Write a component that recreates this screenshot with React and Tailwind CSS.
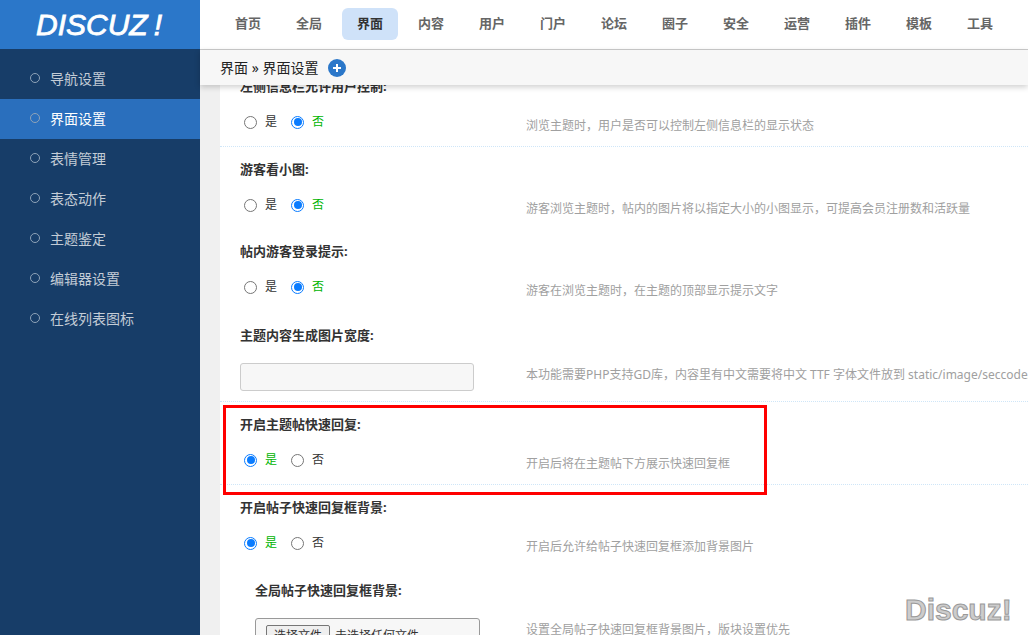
import React from 'react';

const NAV_ITEMS = ['首页', '全局', '界面', '内容', '用户', '门户', '论坛', '圈子', '安全', '运营', '插件', '模板', '工具'];
const SIDE_ITEMS = ['导航设置', '界面设置', '表情管理', '表态动作', '主题鉴定', '编辑器设置', '在线列表图标'];

const Radio = ({ checked, label }) => (
  <label className="flex items-center">
    <span className={`flex h-[13px] w-[13px] items-center justify-center rounded-full border bg-white ${checked ? 'border-[#0a7cff]' : 'border-[#767676]'}`}>
      {checked && <span className="h-[8px] w-[8px] rounded-full bg-[#0a7cff]" />}
    </span>
    <span className={`ml-[8px] text-[12px] leading-[16px] ${checked ? 'text-[#00b400]' : 'text-[#333]'}`}>{label}</span>
  </label>
);

const YesNo = ({ value }) => (
  <div className="flex gap-[14px] pl-[4px]">
    <Radio checked={value === 'yes'} label="是" />
    <Radio checked={value === 'no'} label="否" />
  </div>
);

const Row = ({ title, hint, height, divider, indent, children }) => (
  <div className={`${height} ${divider ? 'border-b border-dotted border-[#cfe6f8]' : ''} ${indent ? 'pl-[35px]' : 'pl-[20px]'}`}>
    <p className="pt-[14px] text-[13px] leading-[16px] font-bold text-[#333]">{title}</p>
    <div className="mt-[20px] flex">
      <div className={`${indent ? 'w-[271px]' : 'w-[286px]'} shrink-0`}>{children}</div>
      <p className="mt-[4px] text-[12px] leading-[16px] whitespace-nowrap text-[#a0a0a0]">{hint}</p>
    </div>
  </div>
);

export default function App() {
  return (
    <div className='relative flex h-[635px] w-[1028px] overflow-hidden bg-[#f0f0f0] font-["Noto_Sans","Noto_Sans_CJK_SC",sans-serif]'>
      {/* Sidebar */}
      <aside className="flex w-[200px] shrink-0 flex-col bg-[#173d68]">
        <div className="flex h-[49px] items-center bg-[#2b77c9] pl-[36px]">
          <span className='flex items-baseline font-["Liberation_Sans",sans-serif] text-[30px] leading-none text-white italic [-webkit-text-stroke:0.8px_#fff]'>
            DISCUZ<span className="ml-[6px]">!</span>
          </span>
        </div>
        <ul className="pt-[10px]">
          {SIDE_ITEMS.map((item, i) => (
            <li key={item} className={`flex h-[40px] items-center pb-[2px] pl-[30px] text-[14px] ${i === 1 ? 'bg-[#2a6fbd] text-white' : 'text-[#c3ccd6]'}`}>
              <span className="mr-[10px] h-[10px] w-[10px] rounded-full border border-[#8fa3b8]" />
              {item}
            </li>
          ))}
        </ul>
      </aside>

      {/* Main */}
      <div className="flex min-w-0 flex-1 flex-col">
        <nav className="flex h-[50px] shrink-0 items-center gap-[5px] border-b border-[#ccc] bg-white pb-[1px] pl-[20px]">
          {NAV_ITEMS.map((item, i) => (
            <span key={item} className={`flex h-[32px] w-[56px] items-center justify-center rounded-[6px] text-[13px] font-bold ${i === 2 ? 'bg-[#cfe2f9] text-[#333]' : 'text-[#666]'}`}>
              {item}
            </span>
          ))}
        </nav>
        <div className="relative z-10 flex h-[35px] shrink-0 items-center bg-[#f7f7f7] pl-[20px] text-[14px] text-[#222] shadow-[0_2px_6px_rgba(0,0,0,0.2)]">
          <span>界面 » 界面设置</span>
          <span className="ml-[10px] flex h-[18px] w-[18px] items-center justify-center rounded-full bg-[#2b77c9]">
            <svg width="10" height="10" viewBox="0 0 10 10"><path d="M5 1v8M1 5h8" stroke="#fff" strokeWidth="2" /></svg>
          </span>
        </div>
        <div className="min-h-0 flex-1 overflow-hidden pl-[20px]">
          <div className="-mt-[21px] bg-white">
            <Row title="左侧信息栏允许用户控制:" hint="浏览主题时，用户是否可以控制左侧信息栏的显示状态" height="h-[83px]" divider>
              <YesNo value="no" />
            </Row>
            <Row title="游客看小图:" hint="游客浏览主题时，帖内的图片将以指定大小的小图显示，可提高会员注册数和活跃量" height="h-[82px]">
              <YesNo value="no" />
            </Row>
            <Row title="帖内游客登录提示:" hint="游客在浏览主题时，在主题的顶部显示提示文字" height="h-[84px]">
              <YesNo value="no" />
            </Row>
            <Row title="主题内容生成图片宽度:" hint="本功能需要PHP支持GD库，内容里有中文需要将中文 TTF 字体文件放到 static/image/seccode/font/ch/ 目录下" height="h-[89px]" divider>
              <div className="h-[28px] w-[234px] rounded-[3px] border border-[#ccc] bg-[#f7f7f7]" />
            </Row>
            <Row title="开启主题帖快速回复:" hint="开启后将在主题帖下方展示快速回复框" height="h-[83px]" divider>
              <YesNo value="yes" />
            </Row>
            <Row title="开启帖子快速回复框背景:" hint="开启后允许给帖子快速回复框添加背景图片" height="h-[83px]">
              <YesNo value="yes" />
            </Row>
            <Row title="全局帖子快速回复框背景:" hint="设置全局帖子快速回复框背景图片，版块设置优先" height="h-[80px]" indent>
              <div className="flex h-[40px] w-[225px] items-start rounded-[3px] border border-[#999] bg-[#f7f7f7] pt-[6px] pl-[10px] text-[12px] text-[#333]">
                <span className="mr-[5px] rounded-[2px] border border-[#767676] bg-[#efefef] px-[7px] leading-[20px]">选择文件</span>
                <span className="leading-[22px]">未选择任何文件</span>
              </div>
            </Row>
          </div>
        </div>
      </div>

      {/* Annotation and watermark lying over the page */}
      <div className="absolute top-[405px] left-[223px] h-[90px] w-[544px] border-[3px] border-[#f00]" />
      <span className='absolute top-[592px] left-[905px] font-["Liberation_Sans",sans-serif] text-[30px] leading-[36px] font-bold text-[#ccc] [-webkit-text-stroke:1px_#999]'>Discuz!</span>
    </div>
  );
}
